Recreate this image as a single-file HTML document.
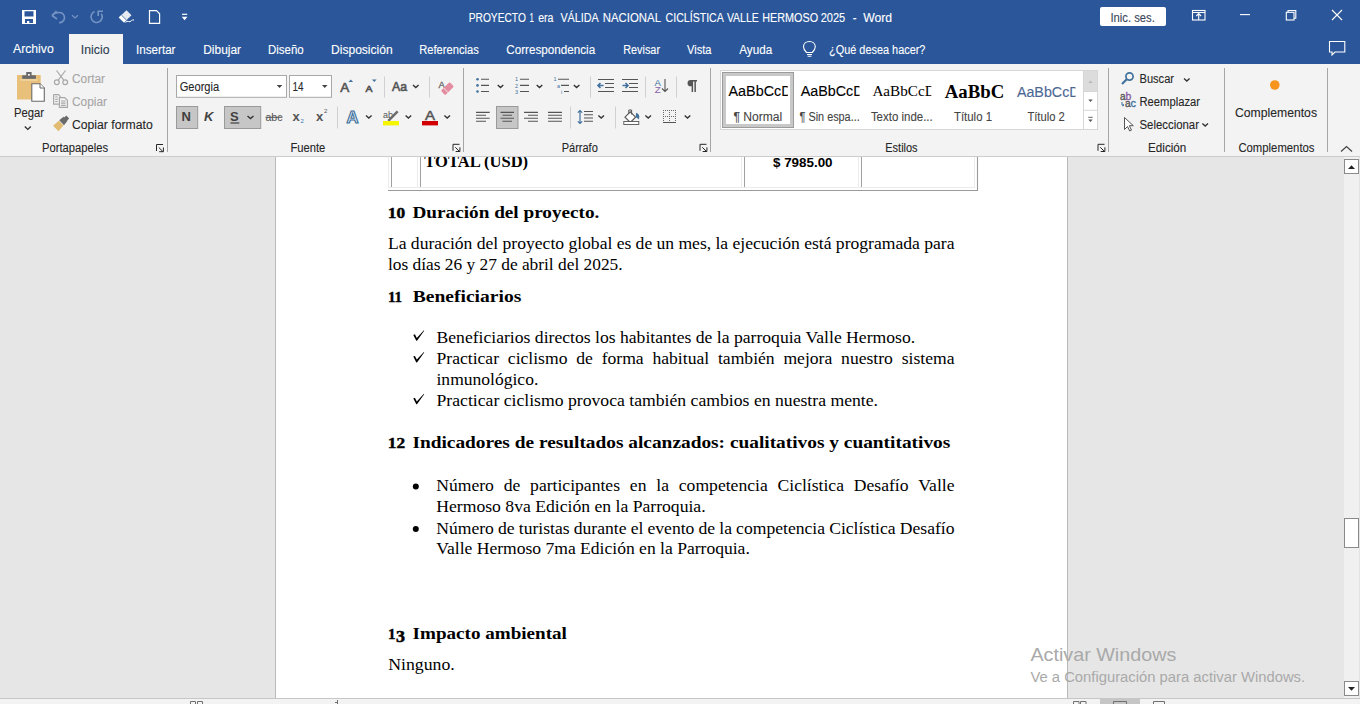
<!DOCTYPE html>
<html><head><meta charset="utf-8">
<style>
*{margin:0;padding:0;box-sizing:border-box}
html,body{width:1360px;height:704px;overflow:hidden;background:#e6e6e6;font-family:"Liberation Sans",sans-serif}
.r{position:absolute}
svg{position:absolute;left:0;top:0}
</style></head><body>
<div class="r" style="left:0;top:0;width:1360px;height:64px;background:#2b579a"></div>
<div class="r" style="left:69px;top:34px;width:54px;height:30px;background:#f3f3f3"></div>
<div class="r" style="left:0;top:64px;width:1360px;height:92px;background:#f3f3f3"></div>
<div class="r" style="left:0;top:156px;width:1360px;height:1px;background:#cccccc"></div>
<div class="r" style="left:0;top:157px;width:1344px;height:541px;background:#e6e6e6"></div>
<div class="r" style="left:275px;top:157px;width:793px;height:541px;background:#b9b9b9"></div>
<div class="r" style="left:276px;top:157px;width:791px;height:541px;background:#ffffff"></div>
<div class="r" style="left:1344px;top:157px;width:16px;height:541px;background:#f0f0f0"></div>
<div class="r" style="left:1359px;top:157px;width:1px;height:541px;background:#e3e3e3"></div>
<div class="r" style="left:0;top:698px;width:1360px;height:1px;background:#c6c6c6"></div>
<div class="r" style="left:0;top:699px;width:1360px;height:5px;background:#f3f3f3"></div>
<div class="r" style="left:1100px;top:699px;width:40px;height:5px;background:#c6c6c6"></div>
<svg width="1360" height="704" viewBox="0 0 1360 704">

<!-- title bar icons -->
<g fill="#fff">
 <path d="M22,10 h14 v14 h-14 z M24.5,11.3 v5.3 h9 v-5.3 z M25,19 v4 h2 v-2 h2.3 v2 h3.7 v-4 z" fill-rule="evenodd"/>
</g>
<g fill="none" stroke="#7593c4" stroke-width="1.6">
 <path d="M52,15.5 C56,11 64,11.5 64.5,17.5 C64.8,21 61,23 59,22.5"/>
 <path d="M52,15.5 l4.5,-4.5 M52,15.5 l5,3.5"/>
 <path d="M72,15.3 l3,2.6 l3,-2.6" stroke-width="1.2"/>
 <path d="M94.6,11.6 A5.6,5.6 0 1 0 101.2,13.6"/>
 <path d="M98.2,16 v-4.8 h4.8"/>
</g>
<g>
 <path d="M126.5,10.2 L131.5,15.2 L124,22.6 L118.8,17.5 Z" fill="#e6e9f2"/>
 <path d="M118.8,17.5 L121.6,14.8 L126.8,20 L124,22.6 Z" fill="#fff"/>
 <path d="M121.4,15 L126.6,20.2" stroke="#2b579a" stroke-width="0.8"/>
 <path d="M125.5,22.5 q1.5,-2 3,-1 q1.5,1 3,-1 q1,-0.8 2.5,-0.5" fill="none" stroke="#fff" stroke-width="1"/>
</g>
<path d="M149.5,10.7 h7 l3.1,3.1 v9.6 h-10.1 z" fill="none" stroke="#fff" stroke-width="1.2"/>
<path d="M182,14.3 h5.2" stroke="#fff" stroke-width="1.2"/>
<path d="M181.7,16.8 h5.8 l-2.9,3.4 z" fill="#fff"/>
<rect x="1100" y="7" width="66" height="19" rx="2" fill="#fff"/>
<g fill="none" stroke="#fff" stroke-width="1.1">
 <rect x="1192.5" y="10.5" width="12.5" height="9.5"/>
 <path d="M1192.5,12.5 h12.5 M1198.7,20 v-6 M1196.3,16 l2.4,-2.4 l2.4,2.4"/>
 <path d="M1240,14.6 h10"/>
 <rect x="1286.3" y="12.3" width="7.7" height="7.7"/>
 <path d="M1288,12.3 v-1.8 h7.8 v7.8 h-1.8"/>
 <path d="M1332,10 l10,10 M1342,10 l-10,10"/>
 <path d="M1329.5,41.5 h15.3 v10.5 h-9.8 l-3,3 v-3 h-2.5 z"/>
</g>
<g fill="none" stroke="#fff" stroke-width="1.1">
 <path d="M806.5,52.5 C804,50 803.5,48 803.5,46.8 C803.5,43.5 806.2,41.5 809.4,41.5 C812.6,41.5 815.3,43.5 815.3,46.8 C815.3,48 814.8,50 812.3,52.5 Z"/>
 <path d="M807,54.5 h5 M807.6,56.3 h3.8"/>
</g>

<!-- Portapapeles -->
<rect x="17" y="75" width="23.7" height="24.5" fill="#e9c079"/>
<rect x="22.2" y="75.3" width="13.7" height="3.6" fill="#6a6a6a"/>
<rect x="26.2" y="72" width="5.4" height="4" fill="#6a6a6a"/>
<rect x="28" y="74" width="1.8" height="1.6" fill="#fff"/>
<rect x="20.5" y="78.9" width="17" height="2" fill="#f4e0b8" opacity="0.6"/>
<path d="M31.8,83.7 h8.2 l4.3,4.3 v13.3 h-12.5 z" fill="#fff" stroke="#6a6a6a" stroke-width="1.1"/>
<path d="M40,83.7 v4.3 h4.3" fill="#fff" stroke="#6a6a6a" stroke-width="1"/>
<g fill="none" stroke="#a8a8a8" stroke-width="1.2">
 <circle cx="56.8" cy="82.2" r="2.4"/><circle cx="65.2" cy="82.2" r="2.4"/>
 <path d="M58.2,80.2 L65.5,70.5 M63.8,80.2 L56.5,70.5"/>
 <path d="M53.6,94.6 h4.8 l1.8,1.8 v1 M53.6,94.6 v9.6 h5.3"/>
 <path d="M59.4,97.6 h5.3 l2.7,2.7 v7.1 h-8 z"/>
 <path d="M55.2,97 h2.5 M55.2,99.3 h2.5 M55.2,101.5 h2.5 M61,101 h4.6 M61,103.2 h4.6 M61,105.4 h4.6"/>
</g>
<path d="M53,125.7 L58.8,120.8 L63.5,125.5 L58.5,131.2 Z" fill="#e2bb72"/>
<path d="M59.2,120.3 L63.6,116.8 L67.5,120.7 L64,125.3 Z" fill="#6a6a6a"/>
<path d="M63.2,118.6 L66.3,115.5 L69.2,118.4 L66.1,121.5 Z" fill="#6a6a6a"/>
<path d="M24.8,126.6 l3,2.8 l3,-2.8" fill="none" stroke="#333" stroke-width="1.35"/>
<path d="M156.5,151.0 v-6.5 h6.5 M158.8,147.5 l4.2,4.2 M159.2,151.7 h4.2 v-4.2" fill="none" stroke="#262626" stroke-width="1"/>

<!-- Fuente -->
<rect x="176.5" y="75.5" width="110" height="21.8" fill="#fff" stroke="#a8a8a8"/>
<rect x="289.5" y="75.5" width="42" height="21.8" fill="#fff" stroke="#a8a8a8"/>
<path d="M276.8,85 h5.5 l-2.75,3 z M322,85 h5.5 l-2.75,3 z" fill="#444"/>
<rect x="176.5" y="106.5" width="21.2" height="22" fill="#c6c6c6" stroke="#9a9a9a"/>
<rect x="224.5" y="106.5" width="36.2" height="22" fill="#c6c6c6" stroke="#9a9a9a"/>

<text x="181.5" y="121.3" font-family="'Liberation Sans'" font-size="13" font-weight="bold" fill="#404040">N</text>
<text x="204" y="121.3" font-family="'Liberation Sans'" font-size="13" font-weight="bold" font-style="italic" fill="#444">K</text>
<text x="230" y="121" font-family="'Liberation Sans'" font-size="13" font-weight="bold" fill="#404040">S</text>
<path d="M230.5,123 h8.8" stroke="#404040" stroke-width="1.2"/>
<path d="M247.5,116 l3,2.6 l3,-2.6" fill="none" stroke="#333" stroke-width="1.35"/>
<text x="265.5" y="120.8" font-family="'Liberation Sans'" font-size="11" fill="#555" textLength="17" lengthAdjust="spacingAndGlyphs">abc</text>
<path d="M265.5,117.3 h17" stroke="#555" stroke-width="1"/>
<text x="292.5" y="120.6" font-family="'Liberation Sans'" font-size="13" font-weight="bold" fill="#555">x</text>
<text x="300.5" y="122.5" font-family="'Liberation Sans'" font-size="6" fill="#3a78b5">2</text>
<text x="316" y="120.6" font-family="'Liberation Sans'" font-size="13" font-weight="bold" fill="#555">x</text>
<text x="324" y="113" font-family="'Liberation Sans'" font-size="6" fill="#555">2</text>
<text x="340.3" y="92" font-family="'Liberation Sans'" font-size="13" fill="#555" stroke="#555" stroke-width="0.6" textLength="9" lengthAdjust="spacingAndGlyphs">A</text>
<path d="M348.5,82 l2.3,-2.5 l2.3,2.5 z" fill="#41719c"/>
<text x="365.5" y="92" font-family="'Liberation Sans'" font-size="9" fill="#555" stroke="#555" stroke-width="0.6" textLength="7" lengthAdjust="spacingAndGlyphs">A</text>
<path d="M372,79.5 h4.6 l-2.3,2.5 z" fill="#41719c"/>
<path d="M384.5,76.5 v21 M429.5,76.5 v21 M337.5,106.5 v22" stroke="#d0d0d0" stroke-width="1"/>
<text x="392" y="90.6" font-family="'Liberation Sans'" font-size="12.5" fill="#555" stroke="#555" stroke-width="0.6" textLength="15" lengthAdjust="spacingAndGlyphs">Aa</text>
<path d="M413,85 l2.8,2.6 l2.8,-2.6" fill="none" stroke="#333" stroke-width="1.35"/>
<text x="438.5" y="88" font-family="'Liberation Sans'" font-size="9.5" fill="#666" stroke="#666" stroke-width="0.3">A</text>
<path d="M441.8,89.8 L448.6,83 Q449.6,82 450.6,83 L453,85.4 Q454,86.4 453,87.4 L446.2,94.2 Q445.2,95.2 444.2,94.2 L441.8,91.8 Q440.8,90.8 441.8,89.8 Z" fill="#e48da1"/>
<path d="M443.6,88 L448.4,92.8" stroke="#f3f3f3" stroke-width="0.9"/>
<text x="346.6" y="122.5" font-family="'Liberation Sans'" font-size="16" font-weight="bold" fill="#e9f1fa" stroke="#41719c" stroke-width="1.1" textLength="12" lengthAdjust="spacingAndGlyphs">A</text>
<path d="M366,115.5 l2.8,2.6 l2.8,-2.6 M405.6,115.5 l2.8,2.6 l2.8,-2.6 M444.4,115.5 l2.8,2.6 l2.8,-2.6" fill="none" stroke="#333" stroke-width="1.35"/>
<text x="383" y="117.5" font-family="'Liberation Sans'" font-size="9" fill="#555">ab</text>
<path d="M387.5,120 L396.8,110.5 L398.5,112.2 L389.2,121.7 Z" fill="#6a6a6a"/>
<rect x="383" y="121" width="16" height="4.4" fill="#f5f500"/>
<text x="425" y="120" font-family="'Liberation Sans'" font-size="13" fill="#555" stroke="#555" stroke-width="0.5" textLength="10" lengthAdjust="spacingAndGlyphs">A</text>
<rect x="422" y="121" width="16" height="4.4" fill="#d20000"/>
<path d="M453.0,150.8 v-6.5 h6.5 M455.3,147.3 l4.2,4.2 M455.7,151.5 h4.2 v-4.2" fill="none" stroke="#262626" stroke-width="1"/>

<g fill="#41719c">
 <circle cx="477.5" cy="79.3" r="1.3"/><circle cx="477.5" cy="85.4" r="1.3"/><circle cx="477.5" cy="91.5" r="1.3"/>
</g>
<path d="M481,79.3 h8 M481,85.4 h8 M481,91.5 h8 M520,79.3 h9 M520,85.4 h9 M520,91.5 h9 M558,79.3 h11 M561,85.4 h8 M564,91.5 h5" stroke="#555" stroke-width="1.1"/>
<text x="515" y="81.3" font-family="'Liberation Sans'" font-size="5.5" fill="#41719c">1</text>
<text x="515" y="87.5" font-family="'Liberation Sans'" font-size="5.5" fill="#41719c">2</text>
<text x="515" y="93.5" font-family="'Liberation Sans'" font-size="5.5" fill="#41719c">3</text>
<text x="553.5" y="81.3" font-family="'Liberation Sans'" font-size="5.5" fill="#41719c">1</text>
<text x="557" y="87.5" font-family="'Liberation Sans'" font-size="5.5" fill="#41719c">a</text>
<text x="561" y="93.5" font-family="'Liberation Sans'" font-size="5.5" fill="#41719c">i</text>
<path d="M497.7,85 l2.8,2.6 l2.8,-2.6 M536.7,85 l2.8,2.6 l2.8,-2.6 M573.8,85 l2.8,2.6 l2.8,-2.6" fill="none" stroke="#333" stroke-width="1.35"/>
<path d="M590.5,76.5 v21 M645.5,76.5 v21 M676.5,76.5 v21 M570.5,106.5 v22 M615.5,106.5 v22" stroke="#d0d0d0" stroke-width="1"/>
<path d="M598,79.5 h16 M605,83.5 h9 M605,87.5 h9 M598,91.5 h16 M622,79.5 h16 M629,83.5 h9 M629,87.5 h9 M622,91.5 h16" stroke="#555" stroke-width="1.1"/>
<path d="M603.5,85.5 h-5 M600.5,83 l-2.5,2.5 l2.5,2.5" fill="none" stroke="#41719c" stroke-width="1.6"/>
<path d="M622.5,85.5 h5 M625.5,83 l2.5,2.5 l-2.5,2.5" fill="none" stroke="#41719c" stroke-width="1.6"/>
<text x="654.6" y="85.6" font-family="'Liberation Sans'" font-size="9" fill="#41719c" textLength="6.4" lengthAdjust="spacingAndGlyphs">A</text>
<text x="654.8" y="92.6" font-family="'Liberation Sans'" font-size="9" fill="#8b5ea5" textLength="6" lengthAdjust="spacingAndGlyphs">Z</text>
<path d="M665,79 v12.5 M662,88.5 l3,3 l3,-3" fill="none" stroke="#555" stroke-width="1.1"/>
<path d="M697,80 h-6.3 a3.1,3.1 0 0 0 0,6.3 h0.9 v5.7 h1.5 v-10.6 h1.3 v10.6 h1.5 v-10.6 h1.1 z" fill="#555"/>
<rect x="496.5" y="106.5" width="21.5" height="22" fill="#c6c6c6" stroke="#9a9a9a"/>
<path d="M476,112.4 h13.7 M476,115.3 h10 M476,118.3 h13.7 M476,121.3 h10" stroke="#555" stroke-width="1.1"/>
<path d="M500.5,112.4 h13.5 M502.5,115.3 h9.5 M500.5,118.3 h13.5 M502.5,121.3 h9.5" stroke="#555" stroke-width="1.1"/>
<path d="M524,112.4 h14 M528,115.3 h10 M524,118.3 h14 M528,121.3 h10" stroke="#555" stroke-width="1.1"/>
<path d="M548,112.4 h14 M548,115.3 h14 M548,118.3 h14 M548,121.3 h14" stroke="#555" stroke-width="1.1"/>
<path d="M584,111.5 h9 M584,114.8 h9 M584,118 h9 M584,121.3 h9" stroke="#555" stroke-width="1.1"/>
<path d="M580,110.5 v13 M577.8,112.7 l2.2,-2.2 l2.2,2.2 M577.8,121.3 l2.2,2.2 l2.2,-2.2" fill="none" stroke="#41719c" stroke-width="1.2"/>
<path d="M598.4,115.5 l2.8,2.6 l2.8,-2.6 M645.4,115.5 l2.8,2.6 l2.8,-2.6 M684.7,115.5 l2.8,2.6 l2.8,-2.6" fill="none" stroke="#333" stroke-width="1.35"/>
<path d="M625,117.2 L630.3,111.9 L635.6,117.2 L630.3,122.5 Z" fill="#fff" stroke="#555" stroke-width="1.1"/>
<path d="M628.8,114 v-4 h2.8 v4.5" fill="none" stroke="#555" stroke-width="1"/>
<path d="M636.2,112.8 C639.5,114 640,117 638.6,119.5 C637.8,118.6 636.8,117.2 635.6,117.2 Z" fill="#41719c"/>
<rect x="623.8" y="121.5" width="15" height="3" fill="#fff" stroke="#555" stroke-width="0.9"/>
<g fill="#6a6a6a"><rect x="663" y="110" width="1" height="1"/><rect x="663" y="112" width="1" height="1"/><rect x="663" y="114" width="1" height="1"/><rect x="663" y="116" width="1" height="1"/><rect x="663" y="118" width="1" height="1"/><rect x="663" y="120" width="1" height="1"/><rect x="665" y="110" width="1" height="1"/><rect x="665" y="116" width="1" height="1"/><rect x="667" y="110" width="1" height="1"/><rect x="667" y="116" width="1" height="1"/><rect x="669" y="110" width="1" height="1"/><rect x="669" y="112" width="1" height="1"/><rect x="669" y="114" width="1" height="1"/><rect x="669" y="116" width="1" height="1"/><rect x="669" y="118" width="1" height="1"/><rect x="669" y="120" width="1" height="1"/><rect x="671" y="110" width="1" height="1"/><rect x="671" y="116" width="1" height="1"/><rect x="673" y="110" width="1" height="1"/><rect x="673" y="116" width="1" height="1"/><rect x="675" y="110" width="1" height="1"/><rect x="675" y="112" width="1" height="1"/><rect x="675" y="114" width="1" height="1"/><rect x="675" y="116" width="1" height="1"/><rect x="675" y="118" width="1" height="1"/><rect x="675" y="120" width="1" height="1"/></g>
<rect x="663" y="122" width="13" height="1" fill="#555"/>
<path d="M700.0,150.8 v-6.5 h6.5 M702.3,147.3 l4.2,4.2 M702.7,151.5 h4.2 v-4.2" fill="none" stroke="#262626" stroke-width="1"/>

<rect x="720.5" y="70.5" width="377" height="59" fill="#fff" stroke="#d6d6d6"/>
<rect x="722.5" y="72.5" width="71" height="55" fill="none" stroke="#9c9c9c"/>
<rect x="724.5" y="74.5" width="67" height="51" fill="none" stroke="#c8c8c8" stroke-width="3"/>
<rect x="1084" y="71" width="13" height="20.5" fill="#dcdcdc"/>
<path d="M1083.5,71 v58 M1084,91.5 h13 M1084,110.3 h13" stroke="#d6d6d6" stroke-width="1"/>
<path d="M1088.3,83 l2.2,-2.4 l2.2,2.4 z" fill="#b8b8b8"/>
<path d="M1088.3,99.5 h4.4 l-2.2,2.4 z" fill="#555"/>
<path d="M1088.3,117.3 h4.4" stroke="#555" stroke-width="0.9"/>
<path d="M1088.3,119.5 h4.4 l-2.2,2.4 z" fill="#555"/>
<path d="M1098.0,150.8 v-6.5 h6.5 M1100.3,147.3 l4.2,4.2 M1100.7,151.5 h4.2 v-4.2" fill="none" stroke="#262626" stroke-width="1"/>

<circle cx="1129.5" cy="76.5" r="3.6" fill="none" stroke="#41719c" stroke-width="1.7"/>
<path d="M1127,79 L1122,84" stroke="#41719c" stroke-width="2.2"/>
<path d="M1184,78.5 l2.8,2.6 l2.8,-2.6 M1202.4,123.5 l2.8,2.6 l2.8,-2.6" fill="none" stroke="#333" stroke-width="1.35"/>
<text x="1120" y="100.4" font-family="'Liberation Sans'" font-size="10.5" fill="#555" stroke="#555" stroke-width="0.35" textLength="5.6" lengthAdjust="spacingAndGlyphs">a</text>
<text x="1125.6" y="100.4" font-family="'Liberation Sans'" font-size="10.5" fill="#8b5ea5" stroke="#8b5ea5" stroke-width="0.35" textLength="5.8" lengthAdjust="spacingAndGlyphs">b</text>
<text x="1125" y="107.4" font-family="'Liberation Sans'" font-size="10.5" fill="#555" stroke="#555" stroke-width="0.35" textLength="5.6" lengthAdjust="spacingAndGlyphs">a</text>
<text x="1130.6" y="107.4" font-family="'Liberation Sans'" font-size="10.5" fill="#41719c" stroke="#41719c" stroke-width="0.35" textLength="5.4" lengthAdjust="spacingAndGlyphs">c</text>
<path d="M1122,102 v3.2 h2 M1122.8,104.2 l1.2,1 l-1.2,1" fill="none" stroke="#41719c" stroke-width="1"/>
<path d="M1124.5,117.5 v12 l3,-3 l2.2,4.5 l1.8,-0.9 l-2.2,-4.4 h4 z" fill="#fff" stroke="#555" stroke-width="1"/>
<circle cx="1274.8" cy="85" r="4.8" fill="#f7941d"/>
<path d="M1341,151.5 l5.5,-5 l5.5,5" fill="none" stroke="#444" stroke-width="1.2"/>
<path d="M167.5,68 v84 M463.5,68 v84 M710.5,68 v84 M1108.5,68 v84 M1224.5,68 v84 M1327.5,68 v84" stroke="#a6a6a6" stroke-width="1"/>

<path d="M413.3,335.0 L414.9,334.3 L416.8,338.0 L423.9,330.3 L424.2,330.8 L417.0,340.8 L416.3,340.8 Z" fill="#000"/><path d="M413.3,356.6 L414.9,355.9 L416.8,359.6 L423.9,351.9 L424.2,352.4 L417.0,362.4 L416.3,362.4 Z" fill="#000"/><path d="M413.3,398.5 L414.9,397.8 L416.8,401.5 L423.9,393.8 L424.2,394.3 L417.0,404.3 L416.3,404.3 Z" fill="#000"/>
<circle cx="415.8" cy="486.6" r="3" fill="#000"/>
<circle cx="415.8" cy="528.9" r="3" fill="#000"/>
<!-- table -->
<path d="M391.5,157 v30 M420.5,157 v30 M744.5,157 v30 M861.5,157 v30" stroke="#a0a0a0" stroke-width="1"/>
<path d="M388.5,157 v31 M417.5,157 v30 M741.5,157 v30 M858.5,157 v30 M974.5,157 v30 M389,187.5 h586" stroke="#ececec" stroke-width="1"/>
<path d="M388,190.5 h590 M977.5,157 v34" stroke="#9a9a9a" stroke-width="1.1"/>
<!-- scrollbar -->
<rect x="1344.5" y="159.5" width="14" height="14" fill="#fff" stroke="#8a8a8a"/>
<path d="M1348,169 h7 l-3.5,-3.8 z" fill="#222"/>
<rect x="1344.5" y="518.5" width="14" height="29" fill="#fff" stroke="#8a8a8a"/>
<rect x="1344.5" y="681.5" width="14" height="14" fill="#fff" stroke="#8a8a8a"/>
<path d="M1348,687 h7 l-3.5,3.8 z" fill="#222"/>
<!-- status bar icons (partial) -->
<g fill="none" stroke="#707070" stroke-width="1">
 <path d="M190.5,704 v-2.5 h5 v2.5 M197.5,704 v-2.5 h5 v2.5"/>
 <path d="M337.5,700 v4 M335,702.5 h3"/>
 <path d="M1073.5,704 v-2.5 h5.5 v2.5 M1080.5,704 v-2.5 h5.5 v2.5"/>
 <path d="M1113.5,704 v-2.5 h13 v2.5"/>
 <path d="M1153.5,704 v-2.5 h11 v2.5"/>
</g>
<text x="468.70" y="22.00" font-family='"Liberation Sans"' font-size="12" font-weight="normal" fill="#ffffff" stroke="#ffffff" stroke-width="0.1" textLength="57.18" lengthAdjust="spacingAndGlyphs" xml:space="preserve">PROYECTO</text>
<text x="529.60" y="22.00" font-family='"Liberation Sans"' font-size="12" font-weight="normal" fill="#ffffff" stroke="#ffffff" stroke-width="0.1" textLength="4.39" lengthAdjust="spacingAndGlyphs" xml:space="preserve">1</text>
<text x="538.20" y="22.00" font-family='"Liberation Sans"' font-size="12" font-weight="normal" fill="#ffffff" stroke="#ffffff" stroke-width="0.1" textLength="15.31" lengthAdjust="spacingAndGlyphs" xml:space="preserve">era</text>
<text x="560.40" y="22.00" font-family='"Liberation Sans"' font-size="12" font-weight="normal" fill="#ffffff" stroke="#ffffff" stroke-width="0.1" textLength="38.30" lengthAdjust="spacingAndGlyphs" xml:space="preserve">VÁLIDA</text>
<text x="602.80" y="22.00" font-family='"Liberation Sans"' font-size="12" font-weight="normal" fill="#ffffff" stroke="#ffffff" stroke-width="0.1" textLength="58.19" lengthAdjust="spacingAndGlyphs" xml:space="preserve">NACIONAL</text>
<text x="665.60" y="22.00" font-family='"Liberation Sans"' font-size="12" font-weight="normal" fill="#ffffff" stroke="#ffffff" stroke-width="0.1" textLength="58.20" lengthAdjust="spacingAndGlyphs" xml:space="preserve">CICLÍSTICA</text>
<text x="726.90" y="22.00" font-family='"Liberation Sans"' font-size="12" font-weight="normal" fill="#ffffff" stroke="#ffffff" stroke-width="0.1" textLength="31.80" lengthAdjust="spacingAndGlyphs" xml:space="preserve">VALLE</text>
<text x="762.20" y="22.00" font-family='"Liberation Sans"' font-size="12" font-weight="normal" fill="#ffffff" stroke="#ffffff" stroke-width="0.1" textLength="55.90" lengthAdjust="spacingAndGlyphs" xml:space="preserve">HERMOSO</text>
<text x="820.70" y="22.00" font-family='"Liberation Sans"' font-size="12" font-weight="normal" fill="#ffffff" stroke="#ffffff" stroke-width="0.1" textLength="24.50" lengthAdjust="spacingAndGlyphs" xml:space="preserve">2025</text>
<text x="852.70" y="22.00" font-family='"Liberation Sans"' font-size="12" font-weight="normal" fill="#ffffff" stroke="#ffffff" stroke-width="0.1" textLength="3.80" lengthAdjust="spacingAndGlyphs" xml:space="preserve">-</text>
<text x="863.20" y="22.00" font-family='"Liberation Sans"' font-size="12" font-weight="normal" fill="#ffffff" stroke="#ffffff" stroke-width="0.1" textLength="28.88" lengthAdjust="spacingAndGlyphs" xml:space="preserve">Word</text>
<text x="1110.46" y="22.00" font-family='"Liberation Sans"' font-size="12" font-weight="normal" fill="#3a4658" stroke="#3a4658" stroke-width="0.1" textLength="44.35" lengthAdjust="spacingAndGlyphs" xml:space="preserve">Inic. ses.</text>
<text x="136.03" y="53.70" font-family='"Liberation Sans"' font-size="12" font-weight="normal" fill="#ffffff" stroke="#ffffff" stroke-width="0.1" textLength="39.47" lengthAdjust="spacingAndGlyphs" xml:space="preserve">Insertar</text>
<text x="203.25" y="53.70" font-family='"Liberation Sans"' font-size="12" font-weight="normal" fill="#ffffff" stroke="#ffffff" stroke-width="0.1" textLength="37.75" lengthAdjust="spacingAndGlyphs" xml:space="preserve">Dibujar</text>
<text x="268.00" y="53.70" font-family='"Liberation Sans"' font-size="12" font-weight="normal" fill="#ffffff" stroke="#ffffff" stroke-width="0.1" textLength="35.69" lengthAdjust="spacingAndGlyphs" xml:space="preserve">Diseño</text>
<text x="331.00" y="53.70" font-family='"Liberation Sans"' font-size="12" font-weight="normal" fill="#ffffff" stroke="#ffffff" stroke-width="0.1" textLength="61.68" lengthAdjust="spacingAndGlyphs" xml:space="preserve">Disposición</text>
<text x="419.25" y="53.70" font-family='"Liberation Sans"' font-size="12" font-weight="normal" fill="#ffffff" stroke="#ffffff" stroke-width="0.1" textLength="59.50" lengthAdjust="spacingAndGlyphs" xml:space="preserve">Referencias</text>
<text x="506.25" y="53.70" font-family='"Liberation Sans"' font-size="12" font-weight="normal" fill="#ffffff" stroke="#ffffff" stroke-width="0.1" textLength="88.93" lengthAdjust="spacingAndGlyphs" xml:space="preserve">Correspondencia</text>
<text x="623.25" y="53.70" font-family='"Liberation Sans"' font-size="12" font-weight="normal" fill="#ffffff" stroke="#ffffff" stroke-width="0.1" textLength="36.75" lengthAdjust="spacingAndGlyphs" xml:space="preserve">Revisar</text>
<text x="687.00" y="53.70" font-family='"Liberation Sans"' font-size="12" font-weight="normal" fill="#ffffff" stroke="#ffffff" stroke-width="0.1" textLength="24.45" lengthAdjust="spacingAndGlyphs" xml:space="preserve">Vista</text>
<text x="739.25" y="53.70" font-family='"Liberation Sans"' font-size="12" font-weight="normal" fill="#ffffff" stroke="#ffffff" stroke-width="0.1" textLength="32.93" lengthAdjust="spacingAndGlyphs" xml:space="preserve">Ayuda</text>
<text x="829.00" y="53.70" font-family='"Liberation Sans"' font-size="12" font-weight="normal" fill="#ffffff" stroke="#ffffff" stroke-width="0.1" textLength="96.45" lengthAdjust="spacingAndGlyphs" xml:space="preserve">¿Qué desea hacer?</text>
<text x="80.88" y="53.70" font-family='"Liberation Sans"' font-size="12" font-weight="normal" fill="#2d3e50" stroke="#2d3e50" stroke-width="0.1" textLength="28.59" lengthAdjust="spacingAndGlyphs" xml:space="preserve">Inicio</text>
<text x="13.00" y="52.90" font-family='"Liberation Sans"' font-size="12" font-weight="normal" fill="#ffffff" stroke="#ffffff" stroke-width="0.1" textLength="40.67" lengthAdjust="spacingAndGlyphs" xml:space="preserve">Archivo</text>
<text x="14.00" y="116.50" font-family='"Liberation Sans"' font-size="12" font-weight="normal" fill="#262626" stroke="#262626" stroke-width="0.1" textLength="30.00" lengthAdjust="spacingAndGlyphs" xml:space="preserve">Pegar</text>
<text x="72.00" y="83.30" font-family='"Liberation Sans"' font-size="12" font-weight="normal" fill="#a6a6a6" stroke="#a6a6a6" stroke-width="0.1" textLength="33.00" lengthAdjust="spacingAndGlyphs" xml:space="preserve">Cortar</text>
<text x="72.00" y="106.00" font-family='"Liberation Sans"' font-size="12" font-weight="normal" fill="#a6a6a6" stroke="#a6a6a6" stroke-width="0.1" textLength="35.00" lengthAdjust="spacingAndGlyphs" xml:space="preserve">Copiar</text>
<text x="72.00" y="129.00" font-family='"Liberation Sans"' font-size="12" font-weight="normal" fill="#262626" stroke="#262626" stroke-width="0.1" textLength="80.67" lengthAdjust="spacingAndGlyphs" xml:space="preserve">Copiar formato</text>
<text x="42.00" y="152.20" font-family='"Liberation Sans"' font-size="12" font-weight="normal" fill="#262626" stroke="#262626" stroke-width="0.1" textLength="66.00" lengthAdjust="spacingAndGlyphs" xml:space="preserve">Portapapeles</text>
<text x="179.70" y="90.60" font-family='"Liberation Sans"' font-size="12" font-weight="normal" fill="#262626" stroke="#262626" stroke-width="0.1" textLength="39.50" lengthAdjust="spacingAndGlyphs" xml:space="preserve">Georgia</text>
<text x="292.50" y="90.60" font-family='"Liberation Sans"' font-size="12" font-weight="normal" fill="#262626" stroke="#262626" stroke-width="0.1" textLength="11.03" lengthAdjust="spacingAndGlyphs" xml:space="preserve">14</text>
<text x="290.40" y="152.20" font-family='"Liberation Sans"' font-size="12" font-weight="normal" fill="#262626" stroke="#262626" stroke-width="0.1" textLength="34.90" lengthAdjust="spacingAndGlyphs" xml:space="preserve">Fuente</text>
<text x="561.70" y="152.20" font-family='"Liberation Sans"' font-size="12" font-weight="normal" fill="#262626" stroke="#262626" stroke-width="0.1" textLength="36.10" lengthAdjust="spacingAndGlyphs" xml:space="preserve">Párrafo</text>
<text x="885.30" y="152.20" font-family='"Liberation Sans"' font-size="12" font-weight="normal" fill="#262626" stroke="#262626" stroke-width="0.1" textLength="32.30" lengthAdjust="spacingAndGlyphs" xml:space="preserve">Estilos</text>
<text x="1139.50" y="83.00" font-family='"Liberation Sans"' font-size="12" font-weight="normal" fill="#262626" stroke="#262626" stroke-width="0.1" textLength="34.50" lengthAdjust="spacingAndGlyphs" xml:space="preserve">Buscar</text>
<text x="1139.50" y="106.00" font-family='"Liberation Sans"' font-size="12" font-weight="normal" fill="#262626" stroke="#262626" stroke-width="0.1" textLength="60.50" lengthAdjust="spacingAndGlyphs" xml:space="preserve">Reemplazar</text>
<text x="1139.50" y="129.00" font-family='"Liberation Sans"' font-size="12" font-weight="normal" fill="#262626" stroke="#262626" stroke-width="0.1" textLength="59.50" lengthAdjust="spacingAndGlyphs" xml:space="preserve">Seleccionar</text>
<text x="1148.00" y="151.80" font-family='"Liberation Sans"' font-size="12" font-weight="normal" fill="#262626" stroke="#262626" stroke-width="0.1" textLength="38.36" lengthAdjust="spacingAndGlyphs" xml:space="preserve">Edición</text>
<text x="1235.00" y="117.00" font-family='"Liberation Sans"' font-size="12" font-weight="normal" fill="#262626" stroke="#262626" stroke-width="0.1" textLength="82.00" lengthAdjust="spacingAndGlyphs" xml:space="preserve">Complementos</text>
<text x="1238.40" y="151.80" font-family='"Liberation Sans"' font-size="12" font-weight="normal" fill="#262626" stroke="#262626" stroke-width="0.1" textLength="76.10" lengthAdjust="spacingAndGlyphs" xml:space="preserve">Complementos</text>
<svg x="0" y="0" width="787.8" height="704" overflow="hidden"><text x="728.50" y="96.40" font-family='"Liberation Sans"' font-size="14" font-weight="normal" fill="#000000" stroke="#000000" stroke-width="0.1" textLength="63.11" lengthAdjust="spacingAndGlyphs" xml:space="preserve">AaBbCcD</text></svg>
<text x="733.40" y="120.60" font-family='"Liberation Sans"' font-size="12" font-weight="normal" fill="#444444" stroke="#444444" stroke-width="0.1" textLength="48.77" lengthAdjust="spacingAndGlyphs" xml:space="preserve">¶ Normal</text>
<svg x="0" y="0" width="859.5" height="704" overflow="hidden"><text x="800.70" y="96.40" font-family='"Liberation Sans"' font-size="14" font-weight="normal" fill="#000000" stroke="#000000" stroke-width="0.1" textLength="62.91" lengthAdjust="spacingAndGlyphs" xml:space="preserve">AaBbCcD</text></svg>
<text x="799.60" y="120.60" font-family='"Liberation Sans"' font-size="12" font-weight="normal" fill="#444444" stroke="#444444" stroke-width="0.1" textLength="60.10" lengthAdjust="spacingAndGlyphs" xml:space="preserve">¶ Sin espa...</text>
<svg x="0" y="0" width="931.3" height="704" overflow="hidden"><text x="872.40" y="95.60" font-family='"Liberation Serif"' font-size="14" font-weight="normal" fill="#000000" textLength="63.22" lengthAdjust="spacingAndGlyphs" xml:space="preserve">AaBbCcD</text></svg>
<text x="870.90" y="120.60" font-family='"Liberation Sans"' font-size="12" font-weight="normal" fill="#444444" stroke="#444444" stroke-width="0.1" textLength="61.82" lengthAdjust="spacingAndGlyphs" xml:space="preserve">Texto inde...</text>
<text x="944.80" y="97.70" font-family='"Liberation Serif"' font-size="18" font-weight="bold" fill="#000000" textLength="59.44" lengthAdjust="spacingAndGlyphs" xml:space="preserve">AaBbC</text>
<text x="954.00" y="120.80" font-family='"Liberation Sans"' font-size="12" font-weight="normal" fill="#444444" stroke="#444444" stroke-width="0.1" textLength="37.99" lengthAdjust="spacingAndGlyphs" xml:space="preserve">Título 1</text>
<svg x="0" y="0" width="1075.5" height="704" overflow="hidden"><text x="1016.90" y="96.90" font-family='"Liberation Sans"' font-size="14" font-weight="normal" fill="#4a6694" stroke="#4a6694" stroke-width="0.1" textLength="62.71" lengthAdjust="spacingAndGlyphs" xml:space="preserve">AaBbCcD</text></svg>
<text x="1027.40" y="120.80" font-family='"Liberation Sans"' font-size="12" font-weight="normal" fill="#444444" stroke="#444444" stroke-width="0.1" textLength="37.30" lengthAdjust="spacingAndGlyphs" xml:space="preserve">Título 2</text>
<text x="1030.40" y="660.80" font-family='"Liberation Sans"' font-size="18.5" font-weight="normal" fill="#a9a9a9" textLength="145.87" lengthAdjust="spacingAndGlyphs" xml:space="preserve">Activar Windows</text>
<text x="1030.40" y="681.50" font-family='"Liberation Sans"' font-size="14" font-weight="normal" fill="#a9a9a9" textLength="274.74" lengthAdjust="spacingAndGlyphs" xml:space="preserve">Ve a Configuración para activar Windows.</text>
<svg x="0" y="157" width="1360" height="541" viewBox="0 157 1360 541" overflow="hidden">
<text x="424.30" y="166.60" font-family='"Liberation Serif"' font-size="16" font-weight="bold" fill="#000000" textLength="103.84" lengthAdjust="spacingAndGlyphs" xml:space="preserve">TOTAL (USD)</text>
<text x="773.00" y="166.80" font-family='"Liberation Sans"' font-size="13" font-weight="bold" fill="#000000" textLength="59.54" lengthAdjust="spacingAndGlyphs" xml:space="preserve">$ 7985.00</text>
<text x="387.78" y="218.00" font-family='"Liberation Serif"' font-size="14.2" font-weight="bold" fill="#000000" stroke="#000000" stroke-width="0.4" textLength="17.34" lengthAdjust="spacingAndGlyphs" xml:space="preserve">10</text>
<text x="412.50" y="218.00" font-family='"Liberation Serif"' font-size="16" font-weight="bold" fill="#000000" textLength="186.90" lengthAdjust="spacingAndGlyphs" xml:space="preserve">Duración del proyecto.</text>
<text x="388.00" y="248.70" font-family='"Liberation Serif"' font-size="16" font-weight="normal" fill="#000000" textLength="18.56" lengthAdjust="spacingAndGlyphs">La</text>
<text x="410.86" y="248.70" font-family='"Liberation Serif"' font-size="16" font-weight="normal" fill="#000000" textLength="61.57" lengthAdjust="spacingAndGlyphs">duración</text>
<text x="476.73" y="248.70" font-family='"Liberation Serif"' font-size="16" font-weight="normal" fill="#000000" textLength="21.50" lengthAdjust="spacingAndGlyphs">del</text>
<text x="502.53" y="248.70" font-family='"Liberation Serif"' font-size="16" font-weight="normal" fill="#000000" textLength="61.57" lengthAdjust="spacingAndGlyphs">proyecto</text>
<text x="568.40" y="248.70" font-family='"Liberation Serif"' font-size="16" font-weight="normal" fill="#000000" textLength="43.99" lengthAdjust="spacingAndGlyphs">global</text>
<text x="616.68" y="248.70" font-family='"Liberation Serif"' font-size="16" font-weight="normal" fill="#000000" textLength="14.66" lengthAdjust="spacingAndGlyphs">es</text>
<text x="635.64" y="248.70" font-family='"Liberation Serif"' font-size="16" font-weight="normal" fill="#000000" textLength="16.61" lengthAdjust="spacingAndGlyphs">de</text>
<text x="656.55" y="248.70" font-family='"Liberation Serif"' font-size="16" font-weight="normal" fill="#000000" textLength="17.60" lengthAdjust="spacingAndGlyphs">un</text>
<text x="678.45" y="248.70" font-family='"Liberation Serif"' font-size="16" font-weight="normal" fill="#000000" textLength="32.75" lengthAdjust="spacingAndGlyphs">mes,</text>
<text x="715.49" y="248.70" font-family='"Liberation Serif"' font-size="16" font-weight="normal" fill="#000000" textLength="12.70" lengthAdjust="spacingAndGlyphs">la</text>
<text x="732.49" y="248.70" font-family='"Liberation Serif"' font-size="16" font-weight="normal" fill="#000000" textLength="67.43" lengthAdjust="spacingAndGlyphs">ejecución</text>
<text x="804.21" y="248.70" font-family='"Liberation Serif"' font-size="16" font-weight="normal" fill="#000000" textLength="27.36" lengthAdjust="spacingAndGlyphs">está</text>
<text x="835.87" y="248.70" font-family='"Liberation Serif"' font-size="16" font-weight="normal" fill="#000000" textLength="84.05" lengthAdjust="spacingAndGlyphs">programada</text>
<text x="924.22" y="248.70" font-family='"Liberation Serif"' font-size="16" font-weight="normal" fill="#000000" textLength="30.28" lengthAdjust="spacingAndGlyphs">para</text>
<text x="388.00" y="269.60" font-family='"Liberation Serif"' font-size="16" font-weight="normal" fill="#000000" textLength="234.58" lengthAdjust="spacingAndGlyphs" xml:space="preserve">los días 26 y 27 de abril del 2025.</text>
<text x="387.94" y="301.60" font-family='"Liberation Serif"' font-size="14.2" font-weight="bold" fill="#000000" stroke="#000000" stroke-width="0.4" textLength="14.16" lengthAdjust="spacingAndGlyphs" xml:space="preserve">11</text>
<text x="412.80" y="301.60" font-family='"Liberation Serif"' font-size="16" font-weight="bold" fill="#000000" textLength="108.48" lengthAdjust="spacingAndGlyphs" xml:space="preserve">Beneficiarios</text>
<text x="436.50" y="342.60" font-family='"Liberation Serif"' font-size="16" font-weight="normal" fill="#000000" textLength="478.60" lengthAdjust="spacingAndGlyphs" xml:space="preserve">Beneficiarios directos los habitantes de la parroquia Valle Hermoso.</text>
<text x="436.50" y="364.20" font-family='"Liberation Serif"' font-size="16" font-weight="normal" fill="#000000" textLength="62.54" lengthAdjust="spacingAndGlyphs">Practicar</text>
<text x="507.83" y="364.20" font-family='"Liberation Serif"' font-size="16" font-weight="normal" fill="#000000" textLength="59.63" lengthAdjust="spacingAndGlyphs">ciclismo</text>
<text x="576.25" y="364.20" font-family='"Liberation Serif"' font-size="16" font-weight="normal" fill="#000000" textLength="16.61" lengthAdjust="spacingAndGlyphs">de</text>
<text x="601.66" y="364.20" font-family='"Liberation Serif"' font-size="16" font-weight="normal" fill="#000000" textLength="42.02" lengthAdjust="spacingAndGlyphs">forma</text>
<text x="652.48" y="364.20" font-family='"Liberation Serif"' font-size="16" font-weight="normal" fill="#000000" textLength="56.69" lengthAdjust="spacingAndGlyphs">habitual</text>
<text x="717.96" y="364.20" font-family='"Liberation Serif"' font-size="16" font-weight="normal" fill="#000000" textLength="56.69" lengthAdjust="spacingAndGlyphs">también</text>
<text x="783.45" y="364.20" font-family='"Liberation Serif"' font-size="16" font-weight="normal" fill="#000000" textLength="48.86" lengthAdjust="spacingAndGlyphs">mejora</text>
<text x="841.10" y="364.20" font-family='"Liberation Serif"' font-size="16" font-weight="normal" fill="#000000" textLength="51.81" lengthAdjust="spacingAndGlyphs">nuestro</text>
<text x="901.71" y="364.20" font-family='"Liberation Serif"' font-size="16" font-weight="normal" fill="#000000" textLength="52.79" lengthAdjust="spacingAndGlyphs">sistema</text>
<text x="436.50" y="385.20" font-family='"Liberation Serif"' font-size="16" font-weight="normal" fill="#000000" textLength="101.80" lengthAdjust="spacingAndGlyphs" xml:space="preserve">inmunológico.</text>
<text x="436.50" y="406.10" font-family='"Liberation Serif"' font-size="16" font-weight="normal" fill="#000000" textLength="441.50" lengthAdjust="spacingAndGlyphs" xml:space="preserve">Practicar ciclismo provoca también cambios en nuestra mente.</text>
<text x="387.78" y="448.10" font-family='"Liberation Serif"' font-size="14.2" font-weight="bold" fill="#000000" stroke="#000000" stroke-width="0.4" textLength="17.34" lengthAdjust="spacingAndGlyphs" xml:space="preserve">12</text>
<text x="412.40" y="448.10" font-family='"Liberation Serif"' font-size="16" font-weight="bold" fill="#000000" textLength="537.87" lengthAdjust="spacingAndGlyphs" xml:space="preserve">Indicadores de resultados alcanzados: cualitativos y cuantitativos</text>
<text x="436.25" y="490.80" font-family='"Liberation Serif"' font-size="16" font-weight="normal" fill="#000000" textLength="57.67" lengthAdjust="spacingAndGlyphs">Número</text>
<text x="503.73" y="490.80" font-family='"Liberation Serif"' font-size="16" font-weight="normal" fill="#000000" textLength="16.61" lengthAdjust="spacingAndGlyphs">de</text>
<text x="530.14" y="490.80" font-family='"Liberation Serif"' font-size="16" font-weight="normal" fill="#000000" textLength="89.92" lengthAdjust="spacingAndGlyphs">participantes</text>
<text x="629.87" y="490.80" font-family='"Liberation Serif"' font-size="16" font-weight="normal" fill="#000000" textLength="16.61" lengthAdjust="spacingAndGlyphs">en</text>
<text x="656.28" y="490.80" font-family='"Liberation Serif"' font-size="16" font-weight="normal" fill="#000000" textLength="12.70" lengthAdjust="spacingAndGlyphs">la</text>
<text x="678.79" y="490.80" font-family='"Liberation Serif"' font-size="16" font-weight="normal" fill="#000000" textLength="88.93" lengthAdjust="spacingAndGlyphs">competencia</text>
<text x="777.52" y="490.80" font-family='"Liberation Serif"' font-size="16" font-weight="normal" fill="#000000" textLength="66.47" lengthAdjust="spacingAndGlyphs">Ciclística</text>
<text x="853.80" y="490.80" font-family='"Liberation Serif"' font-size="16" font-weight="normal" fill="#000000" textLength="54.73" lengthAdjust="spacingAndGlyphs">Desafío</text>
<text x="918.34" y="490.80" font-family='"Liberation Serif"' font-size="16" font-weight="normal" fill="#000000" textLength="36.16" lengthAdjust="spacingAndGlyphs">Valle</text>
<text x="436.25" y="511.80" font-family='"Liberation Serif"' font-size="16" font-weight="normal" fill="#000000" textLength="269.35" lengthAdjust="spacingAndGlyphs" xml:space="preserve">Hermoso 8va Edición en la Parroquia.</text>
<text x="436.25" y="533.85" font-family='"Liberation Serif"' font-size="16" font-weight="normal" fill="#000000" textLength="57.67" lengthAdjust="spacingAndGlyphs">Número</text>
<text x="498.05" y="533.85" font-family='"Liberation Serif"' font-size="16" font-weight="normal" fill="#000000" textLength="16.61" lengthAdjust="spacingAndGlyphs">de</text>
<text x="518.79" y="533.85" font-family='"Liberation Serif"' font-size="16" font-weight="normal" fill="#000000" textLength="50.84" lengthAdjust="spacingAndGlyphs">turistas</text>
<text x="573.76" y="533.85" font-family='"Liberation Serif"' font-size="16" font-weight="normal" fill="#000000" textLength="52.77" lengthAdjust="spacingAndGlyphs">durante</text>
<text x="630.66" y="533.85" font-family='"Liberation Serif"' font-size="16" font-weight="normal" fill="#000000" textLength="12.70" lengthAdjust="spacingAndGlyphs">el</text>
<text x="647.49" y="533.85" font-family='"Liberation Serif"' font-size="16" font-weight="normal" fill="#000000" textLength="46.91" lengthAdjust="spacingAndGlyphs">evento</text>
<text x="698.54" y="533.85" font-family='"Liberation Serif"' font-size="16" font-weight="normal" fill="#000000" textLength="16.61" lengthAdjust="spacingAndGlyphs">de</text>
<text x="719.28" y="533.85" font-family='"Liberation Serif"' font-size="16" font-weight="normal" fill="#000000" textLength="12.70" lengthAdjust="spacingAndGlyphs">la</text>
<text x="736.11" y="533.85" font-family='"Liberation Serif"' font-size="16" font-weight="normal" fill="#000000" textLength="88.93" lengthAdjust="spacingAndGlyphs">competencia</text>
<text x="829.16" y="533.85" font-family='"Liberation Serif"' font-size="16" font-weight="normal" fill="#000000" textLength="66.47" lengthAdjust="spacingAndGlyphs">Ciclística</text>
<text x="899.77" y="533.85" font-family='"Liberation Serif"' font-size="16" font-weight="normal" fill="#000000" textLength="54.73" lengthAdjust="spacingAndGlyphs">Desafío</text>
<text x="436.25" y="554.30" font-family='"Liberation Serif"' font-size="16" font-weight="normal" fill="#000000" textLength="313.55" lengthAdjust="spacingAndGlyphs" xml:space="preserve">Valle Hermoso 7ma Edición en la Parroquia.</text>
<text x="388.03" y="638.90" font-family='"Liberation Serif"' font-size="14.2" font-weight="bold" fill="#000000" stroke="#000000" stroke-width="0.4" textLength="7.57" lengthAdjust="spacingAndGlyphs" xml:space="preserve">1</text>
<text x="395.90" y="641.70" font-family='"Liberation Serif"' font-size="16" font-weight="bold" fill="#000000" stroke="#000000" stroke-width="0.5" textLength="9.00" lengthAdjust="spacingAndGlyphs" xml:space="preserve">3</text>
<text x="412.60" y="638.90" font-family='"Liberation Serif"' font-size="16" font-weight="bold" fill="#000000" textLength="154.24" lengthAdjust="spacingAndGlyphs" xml:space="preserve">Impacto ambiental</text>
<text x="388.20" y="669.70" font-family='"Liberation Serif"' font-size="16" font-weight="normal" fill="#000000" textLength="66.51" lengthAdjust="spacingAndGlyphs" xml:space="preserve">Ninguno.</text>
</svg>
</svg>
</body></html>
